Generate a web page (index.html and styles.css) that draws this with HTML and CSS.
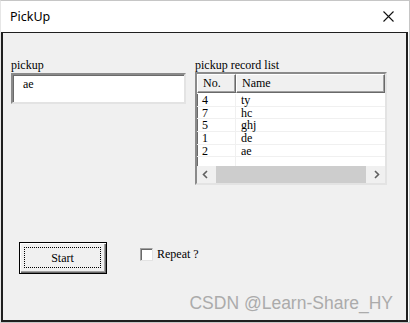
FILE: index.html
```html
<!DOCTYPE html>
<html lang="en">
<head>
    <meta charset="UTF-8">
    <title>PickUp</title>
    <link rel="stylesheet" href="styles.css">
</head>
<body>
  <div class="window">
    <div class="titlebar">
      <span class="title">PickUp</span>
      <svg class="close" width="11" height="11" viewBox="0 0 11 11">
        <path d="M0.5 0.5 L10.5 10.5 M10.5 0.5 L0.5 10.5" stroke="#111" stroke-width="1.1" fill="none"/>
      </svg>
    </div>

    <div class="client">
      <div class="top-row">
        <div class="col-left">
          <div class="label">pickup</div>
          <div class="edit">ae</div>
        </div>
        <div class="col-right">
          <div class="label">pickup record list</div>
          <div class="listview">
            <div class="lv-header">
              <div class="hd hd-no">No.</div>
              <div class="hd hd-name">Name</div>
            </div>
            <div class="lv-rows">
              <div class="row"><span class="c-no">4</span><span class="c-name">ty</span></div>
              <div class="row"><span class="c-no">7</span><span class="c-name">hc</span></div>
              <div class="row"><span class="c-no">5</span><span class="c-name">ghj</span></div>
              <div class="row"><span class="c-no">1</span><span class="c-name">de</span></div>
              <div class="row"><span class="c-no">2</span><span class="c-name">ae</span></div>
              <div class="row row-empty"><span class="c-no"></span><span class="c-name"></span></div>
            </div>
            <div class="hscroll">
              <svg class="arrow" width="17" height="17" viewBox="0 0 17 17">
                <path d="M10 5 L6.5 8.5 L10 12" stroke="#606060" stroke-width="1.6" fill="none"/>
              </svg>
              <div class="track"><div class="thumb"></div></div>
              <svg class="arrow" width="17" height="17" viewBox="0 0 17 17">
                <path d="M7 5 L10.5 8.5 L7 12" stroke="#606060" stroke-width="1.6" fill="none"/>
              </svg>
            </div>
          </div>
        </div>
      </div>

      <div class="bottom-row">
        <div class="button"><div class="focus">Start</div></div>
        <label class="check"><span class="box"></span>Repeat ?</label>
      </div>

      <div class="watermark">CSDN @Learn-Share_HY</div>
    </div>
  </div>
</body>
</html>
```

FILE: styles.css
```css
body {
margin: 0;
background: #ffffff;
font-family: 'Liberation Serif', serif;
}

.window {
width: 410px;
height: 323px;
box-sizing: border-box;
border: 1px solid #c6c6c6;
border-left-color: #e6e6e6;
display: flex;
flex-direction: column;
}

.titlebar {
height: 31px;
display: flex;
align-items: center;
justify-content: space-between;
padding: 0 15px 0 9px;
background: #ffffff;
}

.title {
font-family: 'Noto Sans', sans-serif;
font-size: 12.5px;
color: #000;
}

.close {
display: block;
}

.client {
flex: 1;
position: relative;
background: #f0f0f0;
border: 2px solid #1f1f1f;
border-top-width: 1px;
margin-right: 1px;
padding: 25px 0 0 8px;
font-size: 12px;
color: #000;
}

.top-row {
display: flex;
gap: 9px;
}

.label {
height: 14px;
line-height: 14px;
}

.col-left {
width: 175px;
}

.col-left .label {
height: 15px;
}

.edit {
height: 31px;
box-sizing: border-box;
background: #fff;
border-top: 2px solid #8a8a8a;
border-left: 2px solid #8a8a8a;
border-right: 2px solid #e3e3e3;
border-bottom: 2px solid #e3e3e3;
box-shadow: inset 1px 1px 0 #6a6a6a;
padding: 2px 0 0 10px;
line-height: 14px;
}

.col-right {
width: 192px;
}

.listview {
height: 113px;
box-sizing: border-box;
background: #fff;
border-top: 2px solid #8a8a8a;
border-left: 2px solid #8a8a8a;
border-right: 2px solid #e3e3e3;
border-bottom: 2px solid #e3e3e3;
box-shadow: inset 1px 1px 0 #6a6a6a;
display: flex;
flex-direction: column;
overflow: hidden;
}

.lv-header {
display: flex;
height: 19px;
flex: none;
background: #f0f0f0;
border-bottom: 1px solid #fff;
}

.hd {
box-sizing: border-box;
height: 19px;
line-height: 17px;
padding-left: 5px;
border-top: 1px solid #fff;
border-left: 1px solid #fff;
border-right: 1px solid #696969;
border-bottom: 1px solid #696969;
box-shadow: inset -1px -1px 0 #a0a0a0;
}

.hd-no {
width: 39px;
}

.hd-name {
flex: 1;
}

.lv-rows {
flex: 1;
overflow: hidden;
}

.row {
display: flex;
height: 12.7px;
line-height: 12px;
border-bottom: 1px solid #f0f0f0;
box-sizing: border-box;
}

.c-no {
width: 39px;
box-sizing: border-box;
padding-left: 5px;
border-right: 1px solid #f0f0f0;
}

.c-name {
flex: 1;
padding-left: 5px;
}

.hscroll {
flex: none;
height: 17px;
display: flex;
background: #f0f0f0;
}

.arrow {
flex: none;
display: block;
}

.track {
flex: 1;
padding: 0 2px;
}

.thumb {
height: 17px;
background: #cdcdcd;
}

.bottom-row {
display: flex;
align-items: flex-start;
margin-top: 57px;
padding-left: 8px;
}

.button {
width: 88px;
height: 32px;
box-sizing: border-box;
border: 1px solid #000;
background: #f0f0f0;
box-shadow: inset 1px 1px 0 #fff, inset -1px -1px 0 #696969, inset -2px -2px 0 #a0a0a0;
padding: 4px 5px 5px 4px;
}

.focus {
height: 100%;
box-sizing: border-box;
border: 1px dotted #000;
text-align: center;
line-height: 20px;
}

.check {
display: flex;
align-items: center;
margin-left: 33px;
margin-top: 6px;
line-height: 13px;
}

.box {
width: 13px;
height: 13px;
box-sizing: border-box;
background: #fff;
border-top: 1px solid #a0a0a0;
border-left: 1px solid #a0a0a0;
border-right: 1px solid #e3e3e3;
border-bottom: 1px solid #e3e3e3;
box-shadow: inset 1px 1px 0 #696969;
margin-right: 4px;
}

.watermark {
position: absolute;
right: 13px;
bottom: 6px;
font-family: 'Liberation Sans', sans-serif;
font-size: 17.5px;
color: #ababab;
}
```
